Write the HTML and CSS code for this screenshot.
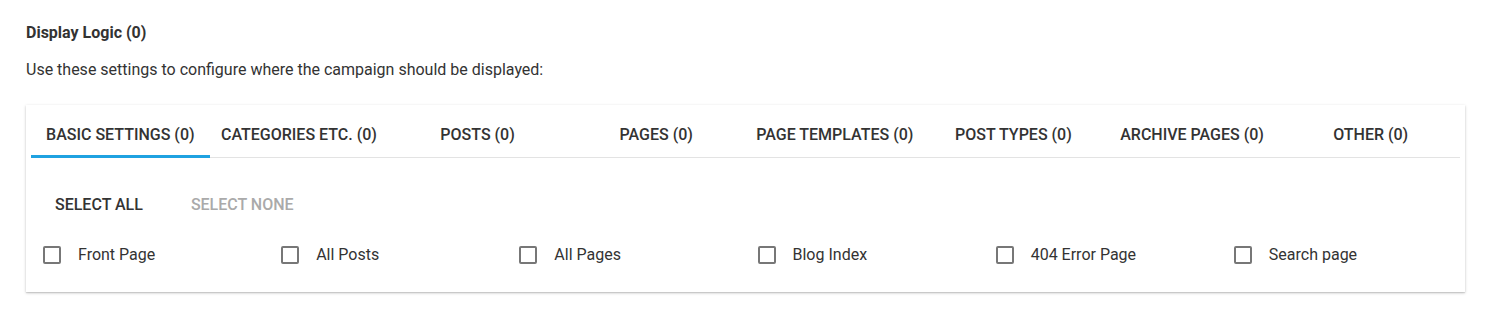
FILE: index.html
```html
<!DOCTYPE html>
<html lang="en">
<head>
    <meta charset="UTF-8">
    <title>Display Logic</title>
    <link rel="stylesheet" href="styles.css">
</head>
<body>

    <!-- Section header -->
    <h3 class="section-title">Display Logic (0)</h3>
    <p class="section-desc">Use these settings to configure where the campaign should be displayed:</p>

    <!-- Tabs card -->
    <div class="card">
        <div class="tabs">
            <a class="tab active">Basic Settings (0)</a>
            <a class="tab">Categories etc. (0)</a>
            <a class="tab">Posts (0)</a>
            <a class="tab">Pages (0)</a>
            <a class="tab">Page Templates (0)</a>
            <a class="tab">Post Types (0)</a>
            <a class="tab">Archive Pages (0)</a>
            <a class="tab">Other (0)</a>
        </div>

        <div class="actions">
            <button class="btn">Select All</button>
            <button class="btn disabled">Select None</button>
        </div>

        <div class="options">
            <label class="option"><span class="box"></span>Front Page</label>
            <label class="option"><span class="box"></span>All Posts</label>
            <label class="option"><span class="box"></span>All Pages</label>
            <label class="option"><span class="box"></span>Blog Index</label>
            <label class="option"><span class="box"></span>404 Error Page</label>
            <label class="option"><span class="box"></span>Search page</label>
        </div>
    </div>

</body>
</html>
```

FILE: styles.css
```css
:root {
    --accent: #1fa2e1;
    --text: #333;
    --muted: #aaa;
    --line: #e3e3e3;
}

* {
    margin: 0;
    padding: 0;
    box-sizing: border-box;
}

html,
body {
    background: #fff;
}

body {
    font-family: Roboto, 'Liberation Sans', sans-serif;
    font-size: 16px;
    line-height: 20px;
    color: var(--text);
    min-height: 100vh;
    padding: 23px 25px 28px 26px;
}

.section-title {
    font-size: 16px;
    font-weight: 700;
    line-height: 20px;
}

.section-desc {
    margin-top: 17px;
}

.card {
    margin-top: 25px;
    background: #fff;
    padding: 0 5px 27px;
    box-shadow: 0 1px 3px rgba(0, 0, 0, 0.2), 0 1px 1px rgba(0, 0, 0, 0.1);
}

.tabs {
    display: flex;
    border-bottom: 1px solid var(--line);
}

.tab {
    flex: 1;
    text-align: center;
    text-transform: uppercase;
    font-weight: 500;
    padding: 20px 0 10px;
    border-bottom: 3px solid transparent;
    margin-bottom: -1px;
    white-space: nowrap;
    cursor: pointer;
}

.tab.active {
    border-bottom-color: var(--accent);
}

.actions {
    display: flex;
    margin-top: 29px;
}

.btn {
    font: inherit;
    font-weight: 500;
    text-transform: uppercase;
    color: var(--text);
    background: none;
    border: none;
    height: 36px;
    padding: 0 24px;
    cursor: pointer;
}

.btn.disabled {
    color: var(--muted);
    cursor: default;
}

.options {
    display: grid;
    grid-template-columns: repeat(6, 1fr);
    margin-top: 22px;
}

.option {
    display: flex;
    align-items: center;
    gap: 17px;
    padding-left: 12px;
    cursor: pointer;
}

.box {
    width: 18px;
    height: 18px;
    border: 2px solid #777;
    border-radius: 2px;
}
```
